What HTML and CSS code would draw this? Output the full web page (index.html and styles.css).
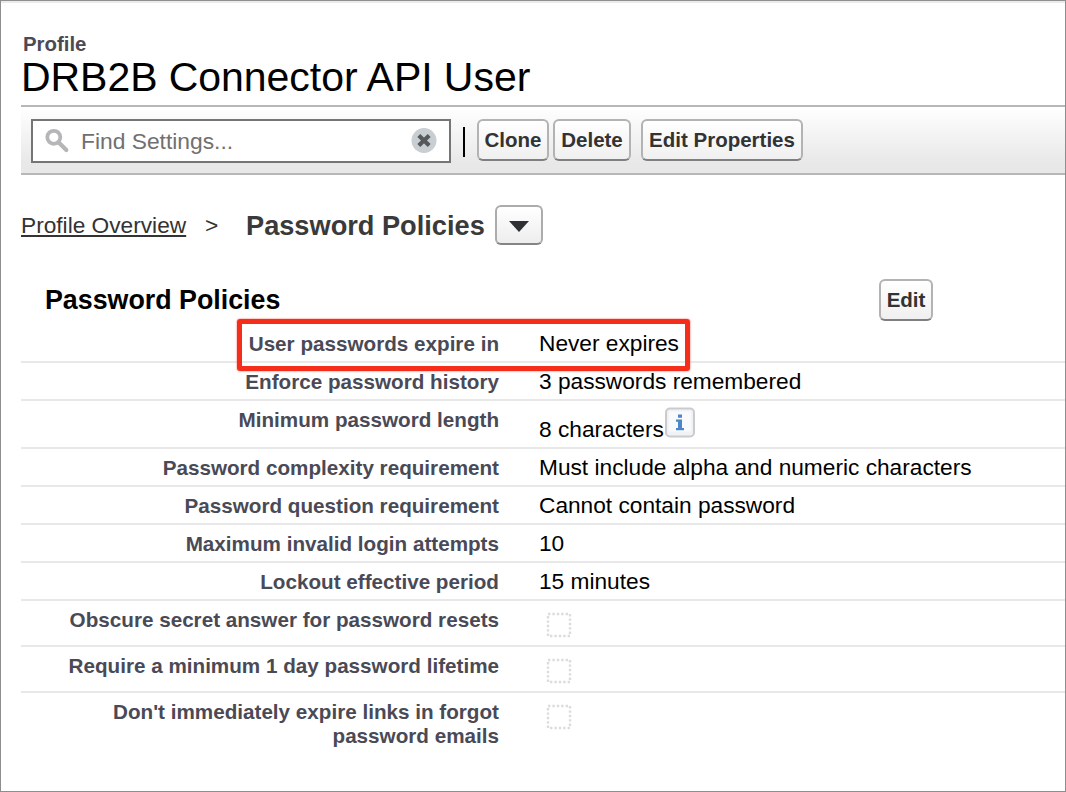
FILE: index.html
```html
<!DOCTYPE html>
<html lang="en">
<head>
<meta charset="utf-8">
<title>Profile: DRB2B Connector API User</title>
<link rel="stylesheet" href="styles.css">
</head>
<body>
<main class="page">
  <header class="heading">
    <div class="kind">Profile</div>
    <h1 class="title">DRB2B Connector API User</h1>
  </header>

  <div class="toolbar">
    <div class="search">
      <svg class="glass" width="28" height="28" viewBox="0 0 28 28"><circle cx="9.800" cy="10.300" r="6.500" fill="none" stroke="#b4b6b7" stroke-width="3.800"/><path d="M15 15.800L22.300 23" stroke="#b4b6b7" stroke-width="4.200" stroke-linecap="round"/></svg>
      <span class="placeholder">Find Settings...</span>
      <svg class="clear" width="26" height="26" viewBox="0 0 26 26"><circle cx="13" cy="12.500" r="12.500" fill="#c9ced3"/><path d="M7.800 7.500l10.400 10M18.200 7.500l-10.400 10" stroke="#56595b" stroke-width="4.200"/></svg>
    </div>
    <span class="divider"></span>
    <button class="btn clone">Clone</button>
    <button class="btn delete">Delete</button>
    <button class="btn props">Edit Properties</button>
  </div>

  <nav class="crumbs">
    <a class="overview">Profile Overview</a>
    <span class="sep">&gt;</span>
    <span class="current">Password Policies</span>
    <button class="picker" aria-label="Choose section"><svg width="20" height="11" viewBox="0 0 20 11"><path d="M0 0h20L10 11z" fill="#2e3033"/></svg></button>
  </nav>

  <section class="panel">
    <div class="panel-head">
      <h2 class="panel-title">Password Policies</h2>
      <button class="btn edit">Edit</button>
    </div>
    <div class="rows">
      <div class="row"><div class="label">User passwords expire in</div><div class="value">Never expires</div><span class="highlight"></span></div>
      <div class="row"><div class="label">Enforce password history</div><div class="value">3 passwords remembered</div></div>
      <div class="row tall"><div class="label">Minimum password length</div><div class="value">8 characters<svg class="info" width="30" height="31" viewBox="0 0 30 31"><rect x="1" y="1.500" width="28" height="28" rx="4" fill="#f1f2f5" stroke="#cbcbcd" stroke-width="2"/><rect x="4" y="4.500" width="22" height="20" fill="#fff" opacity=".6"/><path d="M13 7.500h4v3.200h-4zM11 12.500h6v8.500h2v2.300h-8V21h2v-6.200h-2z" fill="#4b86c8"/></svg></div></div>
      <div class="row"><div class="label">Password complexity requirement</div><div class="value">Must include alpha and numeric characters</div></div>
      <div class="row"><div class="label">Password question requirement</div><div class="value">Cannot contain password</div></div>
      <div class="row"><div class="label">Maximum invalid login attempts</div><div class="value">10</div></div>
      <div class="row"><div class="label">Lockout effective period</div><div class="value">15 minutes</div></div>
      <div class="row check"><div class="label">Obscure secret answer for password resets</div><div class="value"><svg class="box" width="26" height="26" viewBox="0 0 26 26"><path class="dots" d="M2 2H24V24H2z"/></svg></div></div>
      <div class="row check"><div class="label">Require a minimum 1 day password lifetime</div><div class="value"><svg class="box" width="26" height="26" viewBox="0 0 26 26"><path class="dots" d="M2 2H24V24H2z"/></svg></div></div>
      <div class="row check last"><div class="label">Don't immediately expire links in forgot password emails</div><div class="value"><svg class="box" width="26" height="26" viewBox="0 0 26 26"><path class="dots" d="M2 2H24V24H2z"/></svg></div></div>
    </div>
  </section>
</main>
</body>
</html>
```
FILE: styles.css
```css
* { box-sizing: border-box; }
body {
  margin: 0;
  background: #fff;
  font-family: "Liberation Sans", Arial, sans-serif;
}
.page {
  width: 1066px;
  height: 792px;
  border: 1px solid #8e8e8e;
  box-shadow: inset 0 2px 0 #ebebeb;
  padding: 31px 0 0 20px;
  overflow: hidden;
}
.heading { height: 73px; }
.kind {
  padding-left: 2px;
  font-size: 20.4px;
  line-height: 24px;
  font-weight: bold;
  color: #4a4a56;
}
.title {
  margin: 0;
  font-size: 41px;
  line-height: 42px;
  font-weight: normal;
  letter-spacing: -0.05px;
  color: #000;
}
.toolbar {
  display: flex;
  align-items: flex-start;
  height: 70px;
  padding: 12px 0 0 10px;
  border-top: 2px solid #b7b7b7;
  border-bottom: 2px solid #b7b7b7;
  background: linear-gradient(#fff, #e8e8e8 85%);
}
.search {
  display: flex;
  align-items: center;
  width: 420px;
  height: 44px;
  border: 2px solid #757575;
  background: #fff;
  padding: 0 12px 0 11px;
}
.glass { margin-right: 9px; }
.placeholder {
  flex: 1;
  font-size: 22.8px;
  color: #707070;
}
.divider {
  width: 2px;
  height: 30px;
  margin: 8px 12px 0;
  background: #000;
}
.btn {
  height: 42px;
  padding: 0 0 1px;
  border: 2px solid #b3b3b3;
  border-bottom-color: #7f7f7f;
  border-radius: 6px;
  background: linear-gradient(#fff, #f0f0f0);
  font-family: inherit;
  font-size: 20.5px;
  font-weight: bold;
  color: #333;
}
.clone { width: 72px; }
.delete { width: 78px; margin-left: 4px; }
.props { width: 162px; margin-left: 10px; }
.crumbs {
  display: flex;
  align-items: center;
  height: 42px;
  margin-top: 29px;
}
.overview {
  width: 165px;
  padding-top: 1px;
  font-size: 22.7px;
  color: #333;
  white-space: nowrap;
  text-decoration: underline;
  text-decoration-thickness: 2px;
  text-underline-offset: 2px;
}
.sep {
  width: 13px;
  margin-left: 19px;
  padding-top: 1px;
  font-size: 22.7px;
  color: #333;
}
.current {
  width: 249px;
  margin-left: 28px;
  padding-top: 1px;
  font-size: 27.2px;
  font-weight: bold;
  color: #3a3a3a;
  white-space: nowrap;
}
.picker {
  display: flex;
  align-items: center;
  justify-content: center;
  width: 48px;
  height: 40px;
  padding: 2px 0 0;
  border: 2px solid #acacac;
  border-bottom-color: #858585;
  border-radius: 6px;
  background: linear-gradient(#fff, #ededed);
}
.panel { padding-top: 33px; }
.panel-head {
  display: flex;
  justify-content: space-between;
  height: 46px;
  padding: 0 132px 0 24px;
}
.panel-title {
  margin: 0;
  font-size: 26.8px;
  line-height: 42px;
  font-weight: bold;
  color: #000;
}
.edit { width: 54px; }
.row {
  position: relative;
  display: grid;
  grid-template-columns: 478px 1fr;
  column-gap: 40px;
  height: 38px;
  padding-top: 6px;
  border-bottom: 2px solid #e8e8e8;
}
.label {
  justify-self: end;
  width: 450px;
  padding-top: 1px;
  text-align: right;
  font-size: 20.66px;
  line-height: 24px;
  font-weight: bold;
  color: #4a4a56;
}
.value {
  font-size: 22.7px;
  line-height: 24px;
  color: #000;
}
.tall { height: 48px; }
.tall .value {
  display: flex;
  align-items: flex-start;
  padding-top: 10px;
}
.info { margin: -10px 0 0 1px; }
.check { height: 46px; }
.check .value { padding: 5px 0 0 7px; }
.last { height: 70px; border-bottom: 0; }
.box { display: block; }
.dots {
  fill: none;
  stroke: #dcdcdc;
  stroke-width: 2.4;
  stroke-dasharray: 2.4 2;
}
.highlight {
  position: absolute;
  left: 216px;
  top: -6px;
  width: 453px;
  height: 52px;
  border: 5px solid #f52d1b;
  border-radius: 3px;
  box-shadow: 0 0 2px #f5503f;
  z-index: 1;
}
```
